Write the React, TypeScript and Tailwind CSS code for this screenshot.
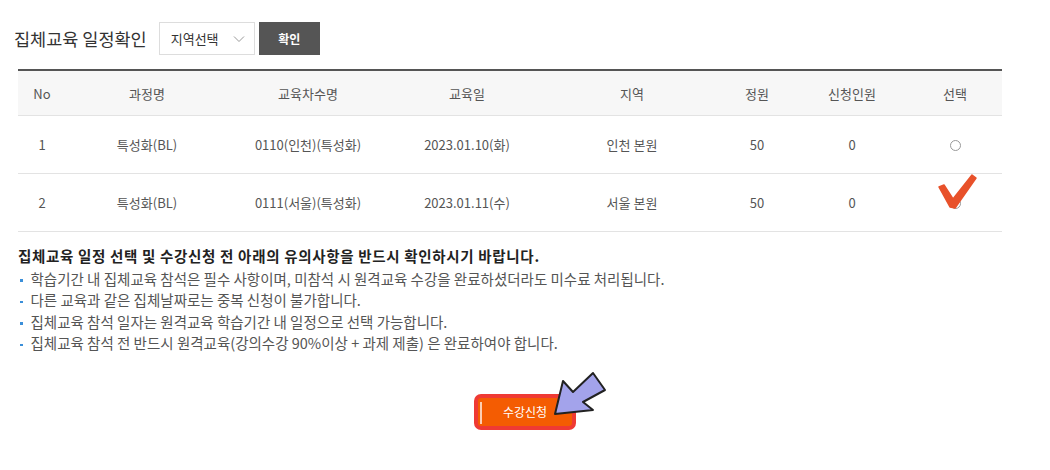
import React from 'react';

const rows = [
  { no: 1, course: '특성화(BL)', round: '0110(인천)(특성화)', date: '2023.01.10(화)', region: '인천 본원', cap: 50, applied: 0 },
  { no: 2, course: '특성화(BL)', round: '0111(서울)(특성화)', date: '2023.01.11(수)', region: '서울 본원', cap: 50, applied: 0 },
];

const notices = [
  '학습기간 내 집체교육 참석은 필수 사항이며, 미참석 시 원격교육 수강을 완료하셨더라도 미수료 처리됩니다.',
  '다른 교육과 같은 집체날짜로는 중복 신청이 불가합니다.',
  '집체교육 참석 일자는 원격교육 학습기간 내 일정으로 선택 가능합니다.',
  '집체교육 참석 전 반드시 원격교육(강의수강 90%이상 + 과제 제출) 은 완료하여야 합니다.',
];

const cols = 'grid grid-cols-[48px_162px_160px_158px_172px_78px_112px_94px] items-center text-center';

export default function App() {
  return (
    <div className="relative w-[1050px] h-[470px] bg-white font-['Noto_Sans_CJK_KR','Noto_Sans',sans-serif] text-[#555] overflow-hidden">
      {/* search bar */}
      <div className="flex items-center pl-[14px] pt-[22px]">
        <h2 className="text-[17.5px] text-[#333] leading-none mr-[12px]">집체교육 일정확인</h2>
        <div className="flex items-center justify-between w-[96px] h-[33px] border border-[#ddd] pl-[11px] pr-[9px] text-[13px] text-[#333]">
          <span>지역선택</span>
          <svg width="12" height="8" viewBox="0 0 12 8" fill="none">
            <path d="M1 1.5L6 6.5L11 1.5" stroke="#999" strokeWidth="1" />
          </svg>
        </div>
        <button className="ml-[4px] w-[61px] h-[33px] bg-[#555] text-white text-[12px] font-bold">확인</button>
      </div>

      {/* table */}
      <div className="ml-[18px] mt-[14px] w-[984px] border-t-2 border-[#555] text-[13px]">
        <div className={`${cols} h-[45px] pt-[2px] bg-[#f7f7f7] border-b border-[#e3e3e3] text-[#555]`}>
          <div>No</div>
          <div>과정명</div>
          <div>교육차수명</div>
          <div>교육일</div>
          <div>지역</div>
          <div>정원</div>
          <div>신청인원</div>
          <div>선택</div>
        </div>
        {rows.map((r) => (
          <div key={r.no} className={`${cols} h-[58px] pt-[1px] border-b border-[#e3e3e3]`}>
            <div>{r.no}</div>
            <div>{r.course}</div>
            <div>{r.round}</div>
            <div>{r.date}</div>
            <div>{r.region}</div>
            <div>{r.cap}</div>
            <div>{r.applied}</div>
            <div className="flex justify-center">
              <span className="block w-[11px] h-[11px] rounded-full border border-[#999] bg-white" />
            </div>
          </div>
        ))}
      </div>

      {/* notice */}
      <div className="ml-[18px] mt-[13px] text-[14.5px] leading-[21.5px]">
        <p className="font-bold text-[#222] tracking-[0.68px] mb-[1px]">집체교육 일정 선택 및 수강신청 전 아래의 유의사항을 반드시 확인하시기 바랍니다.</p>
        <ul>
          {notices.map((n) => (
            <li key={n} className="flex items-center">
              <span className="w-[2.5px] h-[2.5px] bg-[#3b8fd9] ml-[2px] mr-[8px] mt-[4px]" />
              <span>{n}</span>
            </li>
          ))}
        </ul>
      </div>

      {/* submit */}
      <div className="flex justify-center mt-[40px]">
        <button className="relative w-[102px] h-[36px] rounded-[7px] border-[4px] border-[#ef3a34] bg-[#f45c02] text-white text-[12px]">
          <span className="absolute left-[2px] top-[4px] w-[1.5px] h-[22px] bg-white/70" />
          수강신청
        </button>
      </div>

      {/* hand-drawn check mark and arrow */}
      <svg className="absolute left-0 top-0 pointer-events-none" width="1050" height="470">
        <path
          d="M939 187 L944 185 L953 199 L972 175 L976 178 L955 208 L950 207 Z"
          fill="#e8512a"
          stroke="#e8512a"
          strokeWidth="1.5"
          strokeLinejoin="round"
        />
        <polygon
          points="555,414 563,381 573,392 593,373 605,390 583,402 593,410"
          fill="#a3a3eb"
          stroke="#222"
          strokeWidth="2"
          strokeLinejoin="round"
        />
      </svg>
    </div>
  );
}
